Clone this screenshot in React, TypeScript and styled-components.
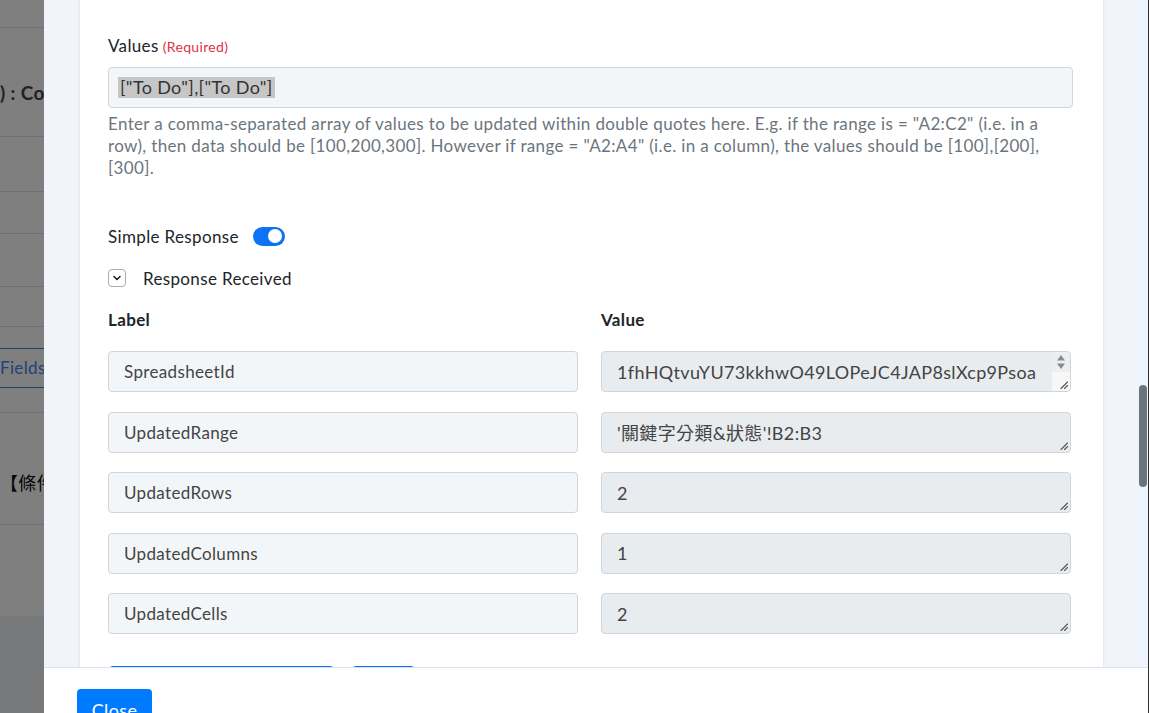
import React from "react";
import styled, { createGlobalStyle } from "styled-components";

const GlobalStyle = createGlobalStyle`
	html, body {
		margin: 0;
		padding: 0;
		width: 100%;
		height: 100%;
		overflow: hidden;
		font-family: Lato, "Noto Sans CJK TC", sans-serif;
		letter-spacing: 0.35px;
		background: #ffffff;
	}
	* {
		box-sizing: border-box;
	}
`;

/* ---------- page behind the dialog ---------- */

const Behind = styled.div`
	display: flex;
	flex-direction: column;
	height: 100vh;
	background: #eef0f4;
`;

const BehindRow = styled.div<{ $h: number; $line?: string; $pad?: number }>`
	height: ${(p) => p.$h}px;
	flex-shrink: 0;
	display: flex;
	align-items: ${(p) => (p.$pad ? "flex-start" : "center")};
	padding-top: ${(p) => p.$pad ?? 0}px;
	background: #ffffff;
	border-bottom: 1px solid ${(p) => p.$line ?? "#dde2e8"};
	white-space: nowrap;
	overflow: hidden;
`;

const BehindText = styled.span<{ $color?: string; $bold?: boolean; $size?: number }>`
	color: ${(p) => p.$color ?? "#333"};
	font-weight: ${(p) => (p.$bold ? 700 : 400)};
	font-size: ${(p) => p.$size ?? 17}px;
	line-height: 24px;
`;

const Backdrop = styled.div`
	position: fixed;
	inset: 0;
	background: rgba(0, 0, 0, 0.5);
`;

/* ---------- dialog ---------- */

const Modal = styled.div`
	position: fixed;
	top: 0;
	left: 44px;
	width: 1105px;
	height: 760px;
	display: flex;
	flex-direction: column;
	background: #ffffff;
	border-right: 1px solid #2f2f2f;
`;

const ModalBody = styled.div`
	height: 667px;
	flex-shrink: 0;
	display: flex;
	background: #f1f5f9;
	overflow: hidden;
`;

const Gutter = styled.div<{ $w: number }>`
	width: ${(p) => p.$w}px;
	flex-shrink: 0;
`;

const Card = styled.div`
	width: 1023px;
	flex-shrink: 0;
	background: #ffffff;
	box-shadow: 0 0 3px rgba(70, 110, 180, 0.22);
	padding: 35px 30px 0 28px;
	color: #212529;
`;

const ScrollTrack = styled.div`
	width: 10px;
	flex-shrink: 0;
	background: #edf4fd;
	padding-top: 385px;
	display: flex;
	justify-content: center;
`;

const ScrollThumb = styled.div`
	width: 8px;
	height: 102px;
	border-radius: 4px;
	background: #6c737b;
`;

const FieldLabel = styled.div`
	font-size: 17px;
	line-height: 22px;
	margin-bottom: 9px;
	color: #212529;
`;

const Required = styled.span`
	color: #dc3545;
	font-size: 14px;
	margin-left: 4px;
`;

const TextBox = styled.div`
	height: 41px;
	display: flex;
	align-items: center;
	padding: 0 9px;
	background: #f3f6f9;
	border: 1px solid #d0d5db;
	border-radius: 4px;
	font-size: 18px;
	color: #333;
`;

const Selected = styled.span`
	background: #c6c6c6;
	padding: 0 2px;
	line-height: 21px;
`;

const HelpText = styled.p`
	margin: 5px 0 0;
	font-size: 17px;
	line-height: 22px;
	color: #6c757d;
`;

const ToggleRow = styled.div`
	margin-top: 45px;
	height: 24px;
	display: flex;
	align-items: center;
	gap: 14px;
	font-size: 17px;
`;

const Switch = styled.span<{ $on: boolean }>`
	width: 32px;
	height: 19px;
	border-radius: 10px;
	background: ${(p) => (p.$on ? "#0d72f5" : "#ced4da")};
	display: flex;
	align-items: center;
	justify-content: ${(p) => (p.$on ? "flex-end" : "flex-start")};
	padding: 0 3px;
`;

const Knob = styled.span`
	width: 14px;
	height: 14px;
	border-radius: 50%;
	background: #ffffff;
`;

const CollapseRow = styled.div`
	margin-top: 18px;
	height: 24px;
	display: flex;
	align-items: center;
	gap: 17px;
	font-size: 17px;
`;

const ChevronBox = styled.span`
	width: 18px;
	height: 18px;
	border: 1px solid #a6acb3;
	border-radius: 4px;
	display: flex;
	align-items: center;
	justify-content: center;
`;

const Grid = styled.div`
	display: grid;
	grid-template-columns: 470px 470px;
	column-gap: 23px;
	row-gap: 19.5px;
	margin-top: 19px;
`;

const ColHead = styled.div`
	font-size: 17px;
	font-weight: 700;
	line-height: 22px;
	margin-bottom: 0.5px;
`;

const KeyBox = styled.div`
	height: 41px;
	display: flex;
	align-items: center;
	padding: 0 15px;
	background: #f3f6f9;
	border: 1px solid #d0d5db;
	border-radius: 4px;
	font-size: 17px;
	color: #444;
`;

const ValueBox = styled.div`
	height: 41px;
	display: flex;
	align-items: stretch;
	padding-left: 15px;
	background: #e9ecef;
	border: 1px solid #d0d5db;
	border-radius: 4px;
	font-size: 18px;
	color: #444;
	overflow: hidden;
`;

const ValueText = styled.span`
	flex: 1;
	display: flex;
	align-items: center;
	white-space: nowrap;
	overflow: hidden;
`;

const ValueSide = styled.span`
	width: 18px;
	display: flex;
	flex-direction: column;
	justify-content: flex-end;
	align-items: center;
`;

const SpinArrows = styled.span`
	flex: 1;
	width: 100%;
	display: flex;
	justify-content: center;
	align-items: center;
	background: #eceef0;
	border-bottom: 1px solid #f8f8f8;
`;

const Grip = styled.span<{ $filled?: boolean }>`
	width: 100%;
	height: 18px;
	display: flex;
	justify-content: flex-end;
	align-items: flex-end;
	padding: 0 2px 2px 0;
	background: ${(p) => (p.$filled ? "#f7f7f7" : "transparent")};
`;

const ActionRow = styled.div`
	margin-top: 32px;
	display: flex;
	gap: 16px;
`;

const ActionButton = styled.span<{ $primary?: boolean; $w: number }>`
	width: ${(p) => p.$w}px;
	height: 38px;
	border-radius: 5px;
	border: 1px solid #0d6efd;
	background: ${(p) => (p.$primary ? "#0d6efd" : "#ffffff")};
`;

const Footer = styled.div`
	flex: 1;
	border-top: 1px solid #d9e2f0;
	background: #ffffff;
	padding: 21px 33px;
`;

const CloseButton = styled.button`
	width: 75px;
	height: 38px;
	border: none;
	border-radius: 4px;
	background: #007bff;
	color: #ffffff;
	font-family: Lato, sans-serif;
	font-size: 18px;
	letter-spacing: 0.35px;
	padding: 10px 0 0;
	display: flex;
	justify-content: center;
	align-items: flex-start;
`;

const ResizeGrip = () => (
	<svg width="8" height="8" viewBox="0 0 8 8">
		<path d="M7.5 1 L1 7.5 M7.5 4.5 L4.5 7.5" stroke="#555" strokeWidth="1.1" strokeLinecap="round" />
	</svg>
);

const ScrollArrows = () => (
	<svg width="10" height="18" viewBox="0 0 10 18">
		<path d="M1 7.5 L5 2 L9 7.5 Z" fill="#8a8a8a" />
		<path d="M1 10.5 L5 16 L9 10.5 Z" fill="#8a8a8a" />
	</svg>
);

const responseRows: { key: string; value: string; scroll?: boolean }[] = [
	{ key: "SpreadsheetId", value: "1fhHQtvuYU73kkhwO49LOPeJC4JAP8slXcp9Psoa", scroll: true },
	{ key: "UpdatedRange", value: "'關鍵字分類&狀態'!B2:B3" },
	{ key: "UpdatedRows", value: "2" },
	{ key: "UpdatedColumns", value: "1" },
	{ key: "UpdatedCells", value: "2" },
];

export default function App(): JSX.Element {
	return (
		<>
			<GlobalStyle />
			<Behind>
				<BehindRow $h={28} />
				<BehindRow $h={109} $pad={53}>
					<BehindText $bold $size={19} $color="#444">
						) : Condition
					</BehindText>
				</BehindRow>
				<BehindRow $h={55} />
				<BehindRow $h={42} />
				<BehindRow $h={53} />
				<BehindRow $h={40} />
				<BehindRow $h={22} $line="#3f7fe0" />
				<BehindRow $h={39} $line="#3f7fe0">
					<BehindText $color="#3f86f0" $size={17}>
						Fields
					</BehindText>
				</BehindRow>
				<BehindRow $h={25} />
				<BehindRow $h={112} $pad={58}>
					<BehindText $color="#111" $size={18}>
						【條件+
					</BehindText>
				</BehindRow>
				<BehindRow $h={92} $line="#eef0f4" />
			</Behind>
			<Backdrop />
			<Modal>
				<ModalBody>
					<Gutter $w={36} />
					<Card>
						<FieldLabel>
							Values<Required>(Required)</Required>
						</FieldLabel>
						<TextBox>
							<Selected>["To Do"],["To Do"]</Selected>
						</TextBox>
						<HelpText>
							Enter a comma-separated array of values to be updated within double quotes here. E.g. if the range is = "A2:C2" (i.e. in a row), then data should be [100,200,300]. However if range = "A2:A4" (i.e. in a column), the values should be [100],[200],[300].
						</HelpText>
						<ToggleRow>
							Simple Response
							<Switch $on>
								<Knob />
							</Switch>
						</ToggleRow>
						<CollapseRow>
							<ChevronBox>
								<svg width="10" height="10" viewBox="0 0 10 10">
									<path d="M2 3.5 L5 6.5 L8 3.5" fill="none" stroke="#222" strokeWidth="1.6" strokeLinecap="round" strokeLinejoin="round" />
								</svg>
							</ChevronBox>
							Response Received
						</CollapseRow>
						<Grid>
							<ColHead>Label</ColHead>
							<ColHead>Value</ColHead>
							{responseRows.map((row) => (
								<React.Fragment key={row.key}>
									<KeyBox>{row.key}</KeyBox>
									<ValueBox>
										<ValueText>{row.value}</ValueText>
										<ValueSide>
											{row.scroll && (
												<SpinArrows>
													<ScrollArrows />
												</SpinArrows>
											)}
											<Grip $filled={row.scroll}>
												<ResizeGrip />
											</Grip>
										</ValueSide>
									</ValueBox>
								</React.Fragment>
							))}
						</Grid>
						<ActionRow>
							<ActionButton $primary $w={227} />
							<ActionButton $w={65} />
						</ActionRow>
					</Card>
					<Gutter $w={35} />
					<ScrollTrack>
						<ScrollThumb />
					</ScrollTrack>
				</ModalBody>
				<Footer>
					<CloseButton>Close</CloseButton>
				</Footer>
			</Modal>
		</>
	);
}
